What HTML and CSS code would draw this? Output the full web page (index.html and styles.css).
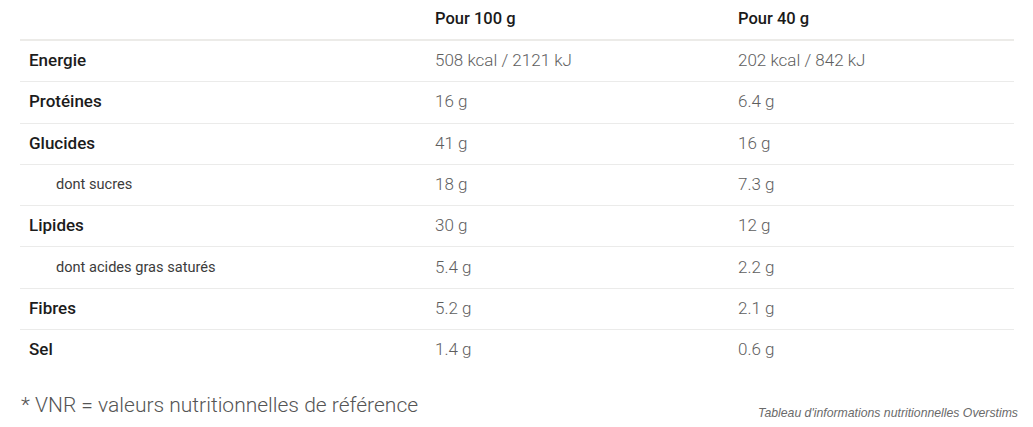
FILE: index.html
```html
<!DOCTYPE html>
<html lang="fr">
<head>
<meta charset="utf-8">
<link rel="stylesheet" href="styles.css">
</head>
<body>
<div class="wrap">
  <table class="nutri">
    <colgroup>
      <col class="c1"><col class="c2"><col class="c3">
    </colgroup>
    <thead>
      <tr><th></th><th>Pour 100 g</th><th>Pour 40 g</th></tr>
    </thead>
    <tbody>
      <tr><td class="lab">Energie</td><td>508 kcal / 2121 kJ</td><td>202 kcal / 842 kJ</td></tr>
      <tr><td class="lab">Protéines</td><td>16 g</td><td>6.4 g</td></tr>
      <tr><td class="lab">Glucides</td><td>41 g</td><td>16 g</td></tr>
      <tr><td class="lab sub">dont sucres</td><td>18 g</td><td>7.3 g</td></tr>
      <tr><td class="lab">Lipides</td><td>30 g</td><td>12 g</td></tr>
      <tr><td class="lab sub">dont acides gras saturés</td><td>5.4 g</td><td>2.2 g</td></tr>
      <tr><td class="lab">Fibres</td><td>5.2 g</td><td>2.1 g</td></tr>
      <tr class="last"><td class="lab">Sel</td><td>1.4 g</td><td>0.6 g</td></tr>
    </tbody>
  </table>
  <div class="foot">
    <p class="note">* VNR = valeurs nutritionnelles de référence</p>
    <p class="caption">Tableau d'informations nutritionnelles Overstims</p>
  </div>
</div>
</body>
</html>
```
FILE: styles.css
```css
html, body {
  margin: 0;
  padding: 0;
  background: #fff;
}
body {
  font-family: Roboto, "Liberation Sans", sans-serif;
  color: #1c1c1c;
}
.wrap {
  width: 1033px;
  padding: 0 19px 0 20px;
  box-sizing: border-box;
}
.nutri {
  width: 994px;
  border-collapse: collapse;
  table-layout: fixed;
}
.c1 { width: 406px; }
.c2 { width: 303px; }
.c3 { width: 285px; }
.nutri th {
  height: 37px;
  padding: 0 0 2px 9px;
  text-align: left;
  font-weight: 500;
  font-size: 16.5px;
  color: #1a1a1a;
  border-bottom: 2px solid #ecebe8;
}
.nutri td {
  height: 38.3px;
  padding: 0 0 2px 9px;
  font-size: 17px;
  font-weight: 300;
  color: #5e5e5e;
  border-bottom: 1px solid #ebebea;
}
.nutri tr.last td {
  border-bottom: none;
}
.nutri td.lab {
  font-weight: 500;
  color: #1c1c1c;
}
.nutri td.sub {
  padding-left: 36px;
  font-size: 14.6px;
  font-weight: 400;
  color: #3c3c3c;
}
.foot {
  display: flex;
  justify-content: space-between;
  align-items: flex-end;
  margin-top: 23px;
  margin-right: -4px;
}
.note {
  margin: 0 0 0 1px;
  font-size: 21px;
  font-weight: 300;
  color: #555;
}
.caption {
  margin: 0 0 -3px 0;
  font-family: "Liberation Sans", Arial, sans-serif;
  font-style: italic;
  font-size: 12.25px;
  color: #6a6a6a;
}
```
